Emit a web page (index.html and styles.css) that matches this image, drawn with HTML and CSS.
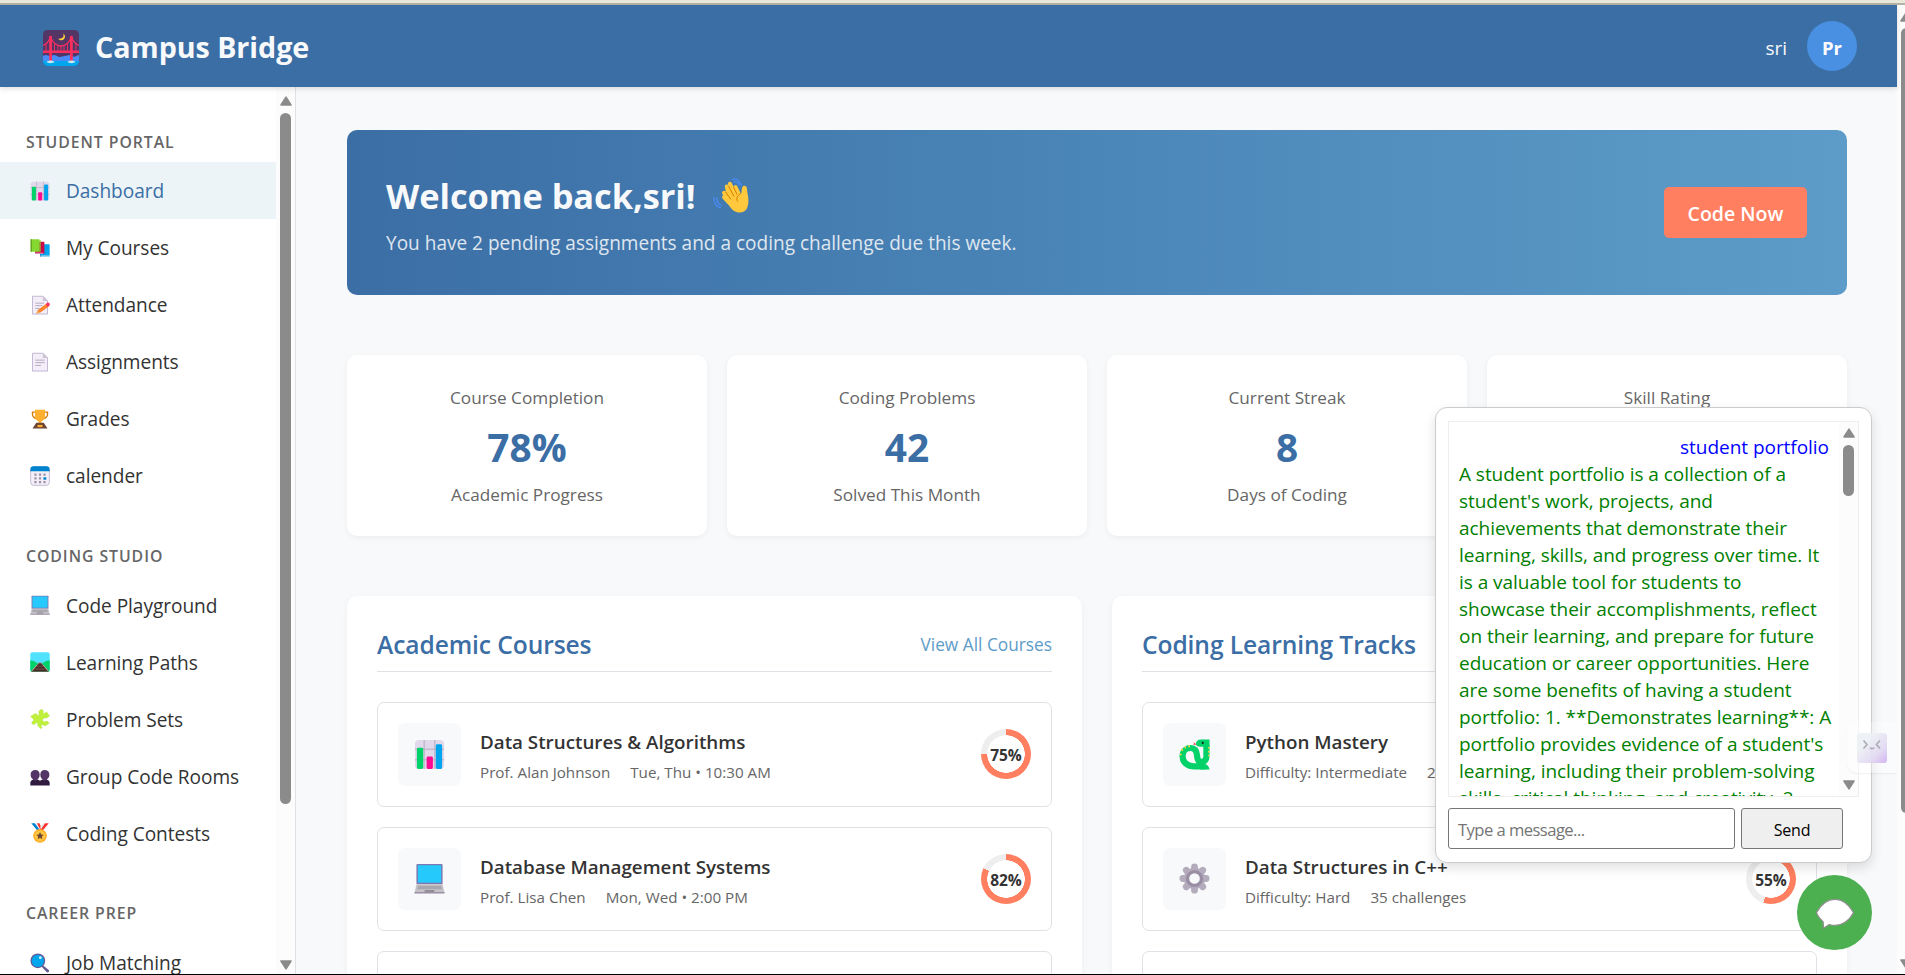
FILE: index.html
```html
<!DOCTYPE html>
<html lang="en">
<head>
<meta charset="utf-8">
<title>Campus Bridge</title>
<link rel="stylesheet" href="styles.css">
</head>
<body>
<svg class="defs" aria-hidden="true">
  <symbol id="i-chart" viewBox="0 0 32 32">
    <rect x="1" y="1" width="30" height="30" rx="4" fill="#e1d8ec"/>
    <path d="M10.500 1v30M21.500 1v30M1 10.500h30M1 21.500h30" stroke="#b4acbc" stroke-width="1"/>
    <rect x="3" y="9" width="6.500" height="22" rx="1.500" fill="#00d26a"/>
    <rect x="13" y="18" width="6.500" height="13" rx="1.500" fill="#fc0b92"/>
    <rect x="22.500" y="5.500" width="6.500" height="25.500" rx="1.500" fill="#00a6ed"/>
  </symbol>
  <symbol id="i-books" viewBox="0 0 32 32">
    <path d="M16 11h15v19H16z" fill="#0084ce"/><path d="M18 10h13v18H18z" fill="#00a6ed"/><path d="M17 28h14v2H17z" fill="#c9e6f7"/>
    <path d="M8 6h15v19H8z" fill="#ca0b4a"/><path d="M8 23.500h13v1.800H8z" fill="#e39bb8"/>
    <path d="M1 2h14v20H1z" fill="#86d72f"/><path d="M1 2h2v20H1z" fill="#5fa01f"/><path d="M15 3h2v19h-2z" fill="#86d72f"/>
  </symbol>
  <symbol id="i-page" viewBox="0 0 32 32">
    <path d="M4 2h17l7 7v21.500H4z" fill="#f3eef8" stroke="#bbb1cf" stroke-width="1.400"/>
    <path d="M20.500 2v7.500H28z" fill="#cdc4d6"/>
    <path d="M8.500 13h15M8.500 17h15M8.500 21.500h9" stroke="#a79bb5" stroke-width="1.300"/>
  </symbol>
  <symbol id="i-memo" viewBox="0 0 32 32">
    <path d="M4 2h17l7 7v21.500H4z" fill="#f3eef8" stroke="#bbb1cf" stroke-width="1.400"/>
    <path d="M20.500 2v7.500H28z" fill="#cdc4d6"/>
    <path d="M8.500 13h14M8.500 17h11M8.500 21.500h7" stroke="#a79bb5" stroke-width="1.300"/>
    <path d="M10 29.500l2.500-5.500L26 14l4 4.500-13.500 9.500z" fill="#ff822d"/>
    <path d="M10 30l2.300-5.800 4.500 4z" fill="#f3ad61"/>
    <path d="M25 14.500l3-2.300c2.200-.8 4.500 2 3.300 4L28.500 19z" fill="#f92f60"/>
  </symbol>
  <symbol id="i-trophy" viewBox="0 0 32 32">
    <path d="M9 5H4c-1 7 3 10 8 11M23 5h5c1 7-3 10-8 11" fill="none" stroke="#d67d00" stroke-width="2.200"/>
    <path d="M8 1h16v9c0 6-3 9-6 10v4h-4v-4c-3-1-6-4-6-10z" fill="#ffb02e"/>
    <path d="M10 22h12l6 9H4z" fill="#6d4534"/><rect x="12" y="25.500" width="8" height="3.500" fill="#ffb02e"/>
  </symbol>
  <symbol id="i-calendar" viewBox="0 0 32 32">
    <rect x="1" y="1" width="30" height="30" rx="5" fill="#f3eef8" stroke="#bbb1cf" stroke-width="1.300"/>
    <path d="M.500 8.500V6a5.500 5.500 0 0 1 5.500-5.500h20A5.500 5.500 0 0 1 31.500 6v2.500z" fill="#0084ce"/>
    <path d="M7 12h3.500v3.500H7zM14.300 12h3.500v3.500h-3.500zM21.500 12H25v3.500h-3.500zM7 18h3.500v3.500H7zM14.300 18h3.500v3.500h-3.500zM7 24h3.500v3.500H7zM14.300 24h3.500v3.500h-3.500zM21.500 24H25v3.500h-3.500z" fill="#9b93a8"/>
    <path d="M21.500 18H26v4h-4.500z" fill="#0084ce"/>
  </symbol>
  <symbol id="i-laptop" viewBox="0 0 32 32">
    <rect x="2.500" y="1" width="27" height="21" rx="1" fill="#7d78b0"/><rect x="4" y="2.300" width="24" height="18" fill="#26c9fc"/>
    <path d="M2.500 22h27L31.500 31H.500z" fill="#c6c3c8"/><path d="M4 23.500h24l.8 3.500H3.200z" fill="#aaa6ad"/><path d="M.500 30h31v1.500H.500z" fill="#998ea4"/><path d="M11 28h10v1.800H11z" fill="#8c8792"/>
  </symbol>
  <symbol id="i-path" viewBox="0 0 32 32">
    <rect x=".500" y=".500" width="31" height="31" rx="3" fill="#50e2ff"/>
    <path d="M.500 13c6 0 9 5 15.500 5s9-5 15.500-5v15.500a3 3 0 0 1-3 3h-25a3 3 0 0 1-3-3z" fill="#00d26a"/>
    <path d="M14 17h4l12.500 14.500h-29z" fill="#6d4534"/>
    <path d="M14.300 17L2 31M17.700 17L30 31" stroke="#d3d3d3" stroke-width="1"/><path d="M12 21h8M9 25h14M6 29.500h20" stroke="#402a32" stroke-width="2"/>
  </symbol>
  <symbol id="i-puzzle" viewBox="0 0 32 32">
    <path d="M9 7l4 3c1 .8 2-.4 1.500-1.600C13.500 5 14 2 17 1c3.500-.8 5 2 4.300 5-.3 1.600 1 2 2 1l3-2.500 5 6.500-4 3c-1.500 1.200-4.500-.5-6.500 1.500-1.500 2 0 5 2.500 4.800 3-.3 4-1.500 5.500 0l2 2.500-7 4.500c-1.500-.5-2.500-2.500-4.800-2-2 .8-.6 3 .5 4.200L17 31.500l-5-5.500c1-2 .8-3.500-1-3.800-2.500-.3-3 3.300-6 2.500C2 23.500 2 20.500 5 19c1.500-.8 1.500-1.800.3-2.800L1 12l4-3z" fill="#bef03c" stroke="#b0dc47" stroke-width=".6"/>
  </symbol>
  <symbol id="i-people" viewBox="0 0 32 32">
    <path d="M1 13.500C1 9 4 6.500 8.500 6.500S15.300 9 15.500 13.500c0 4-1.500 6-3.500 8v3H5v-3c-2.500-2-4-4-4-8zM16.500 13.500C16.700 9 19 6.500 23.500 6.500S31 9 31 13.500c0 4-1.500 6-4 8v3h-7v-3c-2-2-3.500-4-3.500-8z" fill="#533566"/>
    <path d="M.500 31v-4c0-3 2-4.500 5-5 2 1.500 4.500 1.500 6.500 0 2 0 3.500 1 4 2 .5-1 2-2 4-2 2 1.500 4.500 1.500 6.500 0 3 .5 5 2 5 5v4z" fill="#321b41"/>
  </symbol>
  <symbol id="i-medal" viewBox="0 0 32 32">
    <path d="M2 .500h6l9 10-4 3z" fill="#0084ce"/><path d="M8 .500h3l7 8-2 3z" fill="#f4f4f4"/><path d="M11 .500h4l3 6-2 3z" fill="#f8312f"/>
    <path d="M30 .500h-6l-9 10 4 3z" fill="#f8312f"/><path d="M24 .500h-3l-5 6 2 3z" fill="#e6e6e6"/>
    <circle cx="16" cy="20.500" r="11" fill="#ffb02e"/><circle cx="16" cy="20.500" r="8.500" fill="#fcc53f"/>
    <path d="M16 14.500l1.800 4 4.200.4-3.200 2.800 1 4.300-3.800-2.300-3.800 2.300 1-4.300-3.200-2.800 4.200-.4z" fill="#6d4534"/>
  </symbol>
  <symbol id="i-search" viewBox="0 0 32 32">
    <path d="M20 19l10 8c2 2-1 5.500-3.500 3.500L18 21z" fill="#635994"/><circle cx="12.500" cy="12.500" r="11.800" fill="#635994"/><circle cx="12.500" cy="12.500" r="9.800" fill="#00a6ed"/><circle cx="16.500" cy="7.500" r="2.200" fill="#cdf2ff"/>
  </symbol>
  <symbol id="i-bridge" viewBox="0 0 36 36">
    <rect width="36" height="36" rx="4.500" fill="#533566"/>
    <path d="M0 26c3-2 5 0 7 0s4-2 7 0 5 0 8 0 4-2 7 0 5-1 7-1v6H0z" fill="#4a8cf7"/>
    <path d="M0 31h36v.5a4.500 4.500 0 0 1-4.500 4.500h-27A4.500 4.500 0 0 1 0 31.500z" fill="#00a6ed"/>
    <path d="M20 3.500c2 3-1 6-5 5 2 3 7 2 7-2 0-1.500-1-2.500-2-3z" fill="#fcd53f"/>
    <path d="M0 15.500C4 14 6 11 7.500 7c3 7 6 9 10.500 9s7.500-2 10.500-9c1.500 4 3.500 7 7.500 8.500" fill="none" stroke="#f92f60" stroke-width="1.300"/>
    <path d="M3 14v8M11.500 14v8M15 16v6M18 16v6M21 16v6M24.500 14v8M33 14v8" stroke="#f92f60" stroke-width=".9"/>
    <path d="M0 20.500h36v2.500H0zM6.200 6h2.800v26H6.200zM27 6h2.800v26H27z" fill="#f92f60"/>
    <path d="M3.500 32c2-2 6-2 8 0-2 1.500-6 1.500-8 0zM24.500 32c2-2 6-2 8 0-2 1.500-6 1.500-8 0z" fill="#c3ecf5"/>
  </symbol>
  <symbol id="i-wave" viewBox="0 0 36 36">
    <path d="M10.500 17.500L9.200 15.800c-1-2.600 2-4.300 3.600-2L12 9.500C11 6.500 14.500 5.500 15.500 8L15 6.500c-.5-3 3-3.800 4-1l1.800 3.500c.2-2.600 3-2.800 3.600-.4L28 16c1-2 .3-5 1.500-7.300 1.500-1.700 4.300-.7 4.400 1.800.1 4 1.800 8 1.500 13.500C35 31 32 34.500 27 34.500c-5 0-8-2.500-11-7L9.500 20.500c-1.500-2.500 1-4.500 3-2.500z" fill="#ffc83d"/>
    <path d="M12.500 14l5.500 7.500M15.500 8l5.500 10.500M20.500 9l3.500 7.500M28 15.500c-4 2-5 5-3.500 8" fill="none" stroke="#d67d00" stroke-width="1"/>
    <path d="M19 1.500c4-1.500 8 1 9.500 6M21 4c3-.8 4.500.5 5.500 3M.800 19.500c0 5 2.500 9 6.500 10M3.800 20c0 3.500 1.500 6 4.500 7" fill="none" stroke="#4a8cf7" stroke-width="1.300" stroke-linecap="round"/>
  </symbol>
  <symbol id="i-snake" viewBox="0 0 32 32">
    <path d="M28.300 6v12c0 4-2.300 5.700-5 5.700-3.500 0-4.300-2.500-4.600-6.200-.4-5-2.200-8.200-6.700-8.200-5 0-8.300 3.800-8.300 8.700 0 6 5 10.300 12.300 10.300h11" fill="none" stroke="#00d26a" stroke-width="6.400"/>
    <path d="M17.500 5.200c0-3 2-4.700 5-4.700h9V8H22c-2.500 0-4.500-1-4.500-2.800zM22 26h5c2 0 4 2 4.500 5.500H22z" fill="#00d26a"/>
    <path d="M18 5.800l-3-2.800.8 2.200-1.500 1z" fill="#f8312f"/><circle cx="24.500" cy="4" r="1.100" fill="#1c1c1c"/>
    <path d="M2.500 10.500l1.500 1.500M6 8l1 1.500M10.500 6.500v2M.800 16h2M30 9h1.500M30 13h1.500M30 17h1.500" stroke="#fcd53f" stroke-width="1.700" fill="none"/>
  </symbol>
  <symbol id="i-gear" viewBox="0 0 32 32">
    <g stroke="#b4acbc" stroke-width="7" stroke-linecap="round"><path d="M16 4v24M4 16h24M7.500 7.500l17 17M24.500 7.500l-17 17"/></g>
    <circle cx="16" cy="16" r="11" fill="#b4acbc"/><circle cx="16" cy="16" r="7.200" fill="#f8f9fb" stroke="#998ea4" stroke-width="3.400"/>
  </symbol>
  <symbol id="i-up" viewBox="0 0 12 10"><path d="M6 1.200L11 9H1z" fill="#8b8b8b" stroke="#8b8b8b" stroke-width="1.600" stroke-linejoin="round"/></symbol>
  <symbol id="i-down" viewBox="0 0 12 10"><path d="M6 8.800L1 1h10z" fill="#8b8b8b" stroke="#8b8b8b" stroke-width="1.600" stroke-linejoin="round"/></symbol>
</svg>

<div class="window">
  <div class="window-edge"></div>
  <div class="viewport">
    <div class="page">
      <header class="topbar">
        <div class="brand"><svg><use href="#i-bridge"/></svg><span>Campus Bridge</span></div>
        <div class="user"><span class="user-name">sri</span><span class="avatar">Pr</span></div>
      </header>
      <div class="body">
        <aside class="sidebar">
          <nav class="nav">
            <h3>STUDENT PORTAL</h3>
            <a class="active"><svg><use href="#i-chart"/></svg><span>Dashboard</span></a>
            <a><svg><use href="#i-books"/></svg><span>My Courses</span></a>
            <a><svg><use href="#i-memo"/></svg><span>Attendance</span></a>
            <a><svg><use href="#i-page"/></svg><span>Assignments</span></a>
            <a><svg><use href="#i-trophy"/></svg><span>Grades</span></a>
            <a><svg><use href="#i-calendar"/></svg><span>calender</span></a>
            <h3>CODING STUDIO</h3>
            <a><svg><use href="#i-laptop"/></svg><span>Code Playground</span></a>
            <a><svg><use href="#i-path"/></svg><span>Learning Paths</span></a>
            <a><svg><use href="#i-puzzle"/></svg><span>Problem Sets</span></a>
            <a><svg><use href="#i-people"/></svg><span>Group Code Rooms</span></a>
            <a><svg><use href="#i-medal"/></svg><span>Coding Contests</span></a>
            <h3>CAREER PREP</h3>
            <a><svg><use href="#i-search"/></svg><span>Job Matching</span></a>
          </nav>
          <div class="scroll side-scroll"><svg><use href="#i-up"/></svg><i></i><svg class="end"><use href="#i-down"/></svg></div>
        </aside>
        <main class="main">
          <section class="welcome">
            <div>
              <h1>Welcome back,sri! <svg><use href="#i-wave"/></svg></h1>
              <p>You have 2 pending assignments and a coding challenge due this week.</p>
            </div>
            <button class="cta">Code Now</button>
          </section>
          <section class="stats">
            <div class="stat"><p>Course Completion</p><b>78%</b><p>Academic Progress</p></div>
            <div class="stat"><p>Coding Problems</p><b>42</b><p>Solved This Month</p></div>
            <div class="stat"><p>Current Streak</p><b>8</b><p>Days of Coding</p></div>
            <div class="stat"><p>Skill Rating</p></div>
          </section>
          <section class="panels">
            <div class="panel">
              <div class="panel-head"><h2>Academic Courses</h2><a>View All Courses</a></div>
              <div class="course">
                <div class="tile"><svg><use href="#i-chart"/></svg></div>
                <div class="info"><h4>Data Structures &amp; Algorithms</h4><p><span>Prof. Alan Johnson</span><span>Tue, Thu • 10:30 AM</span></p></div>
                <div class="ring" style="--p:75%"><span>75%</span></div>
              </div>
              <div class="course">
                <div class="tile"><svg><use href="#i-laptop"/></svg></div>
                <div class="info"><h4>Database Management Systems</h4><p><span>Prof. Lisa Chen</span><span>Mon, Wed • 2:00 PM</span></p></div>
                <div class="ring" style="--p:82%"><span>82%</span></div>
              </div>
              <div class="course"></div>
            </div>
            <div class="panel">
              <div class="panel-head"><h2>Coding Learning Tracks</h2></div>
              <div class="course">
                <div class="tile"><svg><use href="#i-snake"/></svg></div>
                <div class="info"><h4>Python Mastery</h4><p><span>Difficulty: Intermediate</span><span>2</span></p></div>
              </div>
              <div class="course">
                <div class="tile"><svg><use href="#i-gear"/></svg></div>
                <div class="info"><h4>Data Structures in C++</h4><p><span>Difficulty: Hard</span><span>35 challenges</span></p></div>
                <div class="ring" style="--p:55%"><span>55%</span></div>
              </div>
              <div class="course"></div>
            </div>
          </section>
        </main>
      </div>
    </div>
    <div class="scroll page-scroll"><svg><use href="#i-up"/></svg><i></i><svg class="end"><use href="#i-down"/></svg></div>
  </div>

  <div class="chat">
    <div class="log">
      <div class="messages">
        <p class="mine">student portfolio</p>
        <p class="bot">A student portfolio is a collection of a<br>student's work, projects, and<br>achievements that demonstrate their<br>learning, skills, and progress over time. It<br>is a valuable tool for students to<br>showcase their accomplishments, reflect<br>on their learning, and prepare for future<br>education or career opportunities. Here<br>are some benefits of having a student<br>portfolio: 1. **Demonstrates learning**: A<br>portfolio provides evidence of a student's<br>learning, including their problem-solving<br>skills, critical thinking, and creativity. 2.</p>
      </div>
      <div class="scroll log-scroll"><svg><use href="#i-up"/></svg><i></i><svg class="end"><use href="#i-down"/></svg></div>
    </div>
    <div class="compose"><div class="field">Type a message...</div><button class="send">Send</button></div>
  </div>
  <div class="helper">
    <svg viewBox="0 0 30 30"><defs><linearGradient id="hg" x1="0" y1="0" x2="1" y2="1"><stop offset=".3" stop-color="#edf0f5"/><stop offset=".7" stop-color="#e2d8f2"/><stop offset="1" stop-color="#cdaef0"/></linearGradient></defs>
    <rect width="30" height="30" rx="3" fill="url(#hg)"/><path d="M6.500 7.500l3.500 4-3.500 4M23 7.500l-3.500 4 3.500 4M13 14.500c.5 1.500 3.500 1.500 4 0" fill="none" stroke="#a3a5ae" stroke-width="1.700"/></svg>
  </div>
  <div class="fab">
    <svg viewBox="0 0 42 36"><path d="M21 2C28 2 35 6 40.500 16 36 25 28 29.500 21 29.500c-2 0-4-.3-6-1L9 32.500 8.500 25.500C5.500 23 3 20 1.500 16 7 6 14 2 21 2z" fill="#fff" stroke="#8f8f8f" stroke-width="1.300" stroke-linejoin="round"/></svg>
  </div>
</div>
</body>
</html>
```
FILE: styles.css
```css
* { box-sizing: border-box; margin: 0; padding: 0; }
body { width: 1905px; height: 975px; overflow: hidden; font-family: "Open Sans", "Noto Sans", sans-serif; color: #333; }
.defs { position: absolute; width: 0; height: 0; }
h1, h2, h3, h4, p, a, span, button { white-space: nowrap; }
button { font-family: inherit; }

.window { position: relative; height: 975px; display: flex; flex-direction: column; overflow: hidden; border-bottom: 1px solid #000; }
.window-edge { height: 5px; flex: none; background: #e9e6da; border-bottom: 2px solid #b5b1a5; }
.viewport { flex: 1; min-height: 0; display: flex; }
.page { width: 1897px; display: flex; flex-direction: column; background: #f8f9fb; }

.topbar { height: 82px; flex: none; display: flex; justify-content: space-between; padding: 16px 40px 0 43px; background: #3b6ea5; color: #f8f9fb; box-shadow: 0 2px 5px rgba(0,0,0,.12); z-index: 1; }
.brand { display: flex; gap: 16px; height: 54px; align-items: center; font-size: 28.700px; font-weight: 700; letter-spacing: -.05px; }
.brand svg { width: 36px; height: 36px; }
.brand span { padding-bottom: 3px; }
.user { display: flex; gap: 20px; height: 50px; align-items: center; font-size: 19px; }
.user-name { padding-top: 3px; }
.avatar { width: 50px; height: 50px; border-radius: 50%; background: #4a90e2; color: #fff; font-size: 18.500px; font-weight: 700; line-height: 53px; text-align: center; }

.body { flex: 1; min-height: 0; display: flex; overflow: hidden; }
.sidebar { width: 296px; flex: none; display: flex; background: #fff; border-right: 1px solid #dee2e6; overflow: hidden; }
.nav { width: 276px; padding-top: 2px; }
.nav h3 { height: 73px; padding: 40.500px 0 0 26px; font-size: 15.800px; line-height: 24px; font-weight: 600; color: #666; letter-spacing: .95px; }
.nav h3 ~ h3 { height: 72.700px; padding-top: 39.500px; }
.nav a { display: flex; align-items: center; gap: 16px; height: 57px; padding: 0 0 0 30px; font-size: 19.100px; color: #333; letter-spacing: -.05px; }
.nav a svg { width: 20px; height: 20px; flex: none; }
.nav a span { padding-top: 1px; }
.nav a.active { background: #ecf4f8; color: #3b6ea5; }

.scroll { flex: none; display: flex; flex-direction: column; align-items: center; background: #fcfcfc; overflow: hidden; }
.scroll svg { width: 12px; height: 10px; flex: none; }
.scroll i { width: 11px; border-radius: 6px; background: #8b8b8b; margin-top: 7px; flex: none; }
.scroll .end { margin-top: auto; }
.side-scroll { width: 19px; padding: 9px 0 4px; }
.side-scroll i { height: 691px; }
.page-scroll { width: 8px; align-items: flex-start; padding: 7px 0 5px 3px; }
.page-scroll i { height: 785px; margin: 6px 0 0 1px; }
.log-scroll { width: 19px; padding: 6px 0 6px; }
.log-scroll i { height: 51px; margin-top: 7px; }

.main { flex: 1; padding: 43px 50px 0 51px; overflow: hidden; }
.welcome { height: 165px; display: flex; justify-content: space-between; padding: 42px 40px 0 39px; border-radius: 10px; background: linear-gradient(90deg, #3b6ea5, #4b86b8 50%, #5d9cc8); color: #f8f9fb; }
.welcome h1 { display: flex; align-items: center; gap: 17px; font-size: 34.400px; line-height: 48px; letter-spacing: -.05px; }
.welcome h1 svg { width: 36px; height: 36px; }
.welcome p { margin-top: 8px; font-size: 19.050px; line-height: 30px; opacity: .86; }
.cta { width: 143px; height: 51px; margin-top: 15px; padding-top: 2px; border: 0; border-radius: 5px; background: #ff7f60; color: #fff; font-size: 19.500px; font-weight: 600; }

.stats { display: grid; grid-template-columns: repeat(4, 360px); gap: 20px; margin-top: 60px; }
.stat { height: 181px; padding-top: 28px; text-align: center; background: #fff; border-radius: 10px; box-shadow: 0 2px 6px rgba(0,0,0,.05); color: #666; }
.stat p { font-size: 17.200px; line-height: 30px; }
.stat b { display: block; margin: 9px 0 8px; font-size: 38.800px; line-height: 50px; color: #3b6ea5; }

.panels { display: grid; grid-template-columns: 735px 735px; gap: 30px; margin-top: 60px; }
.panel { height: 500px; padding: 30px; background: #fff; border-radius: 10px; box-shadow: 0 2px 6px rgba(0,0,0,.05); }
.panel-head { display: flex; justify-content: space-between; height: 46px; margin-bottom: 30px; border-bottom: 1px solid #dee2e6; line-height: 38px; }
.panel-head h2 { font-size: 24.600px; font-weight: 600; color: #3b6ea5; letter-spacing: -.1px; }
.panel-head a { font-size: 17.300px; color: #5d9cc8; }
.course { display: flex; height: 104.500px; margin-bottom: 20px; padding: 20px; border: 1px solid #dee2e6; border-radius: 7px; }
.tile { width: 62.500px; height: 62.500px; display: flex; align-items: center; justify-content: center; border-radius: 7px; background: #f8f9fb; }
.tile svg { width: 31px; height: 31px; }
.info { flex: 1; padding: 5px 0 0 19.500px; }
.info h4 { font-size: 18.800px; line-height: 28px; font-weight: 600; }
.info p { display: flex; gap: 20px; margin-top: 4px; font-size: 15.200px; line-height: 24px; color: #666; }
.ring { width: 50px; height: 50px; margin-top: 6px; display: grid; place-items: center; border-radius: 50%; background: radial-gradient(circle, #fff 18.500px, transparent 19px), conic-gradient(#ff7f60 var(--p), #eee 0); font-size: 15.500px; font-weight: 700; }
.ring span { padding-top: 2px; letter-spacing: -.1px; }

.chat { position: absolute; left: 1435px; top: 407px; width: 437px; height: 456px; padding: 13px 12px; background: #fff; border: 1px solid #ccc; border-radius: 12px; box-shadow: 0 5px 12px rgba(0,0,0,.12); }
.log { width: 411px; height: 376px; display: flex; border: 1px solid #eee; overflow: hidden; }
.messages { flex: 1; padding: 12px 10px; font-size: 19px; line-height: 27px; letter-spacing: -.04px; overflow: hidden; }
.mine { color: #00f; text-align: right; }
.bot { color: green; }
.compose { display: flex; gap: 6px; margin-top: 11px; }
.field { width: 287px; height: 41px; padding: 0 0 0 9px; border: 1px solid #767676; border-radius: 3px; font-size: 16.600px; letter-spacing: -.55px; line-height: 41px; color: #757575; }
.send { width: 102px; height: 41px; border: 1px solid #767676; border-radius: 3px; background: #efefef; font-size: 16px; letter-spacing: -.2px; color: #000; padding-top: 2px; }
.helper { position: absolute; left: 1847px; top: 722px; width: 50px; height: 51px; padding: 11px 10px; border-radius: 10px 0 0 10px; background: rgba(255,255,255,.3); box-shadow: 0 1px 2px rgba(0,0,0,.06); }
.helper svg { display: block; width: 30px; height: 30px; opacity: .9; }
.fab { position: absolute; left: 1797px; top: 875px; width: 75px; height: 75px; display: flex; align-items: center; justify-content: center; border-radius: 50%; background: #4caf50; }
.fab svg { width: 40px; height: 35px; margin-top: 4px; }
```
